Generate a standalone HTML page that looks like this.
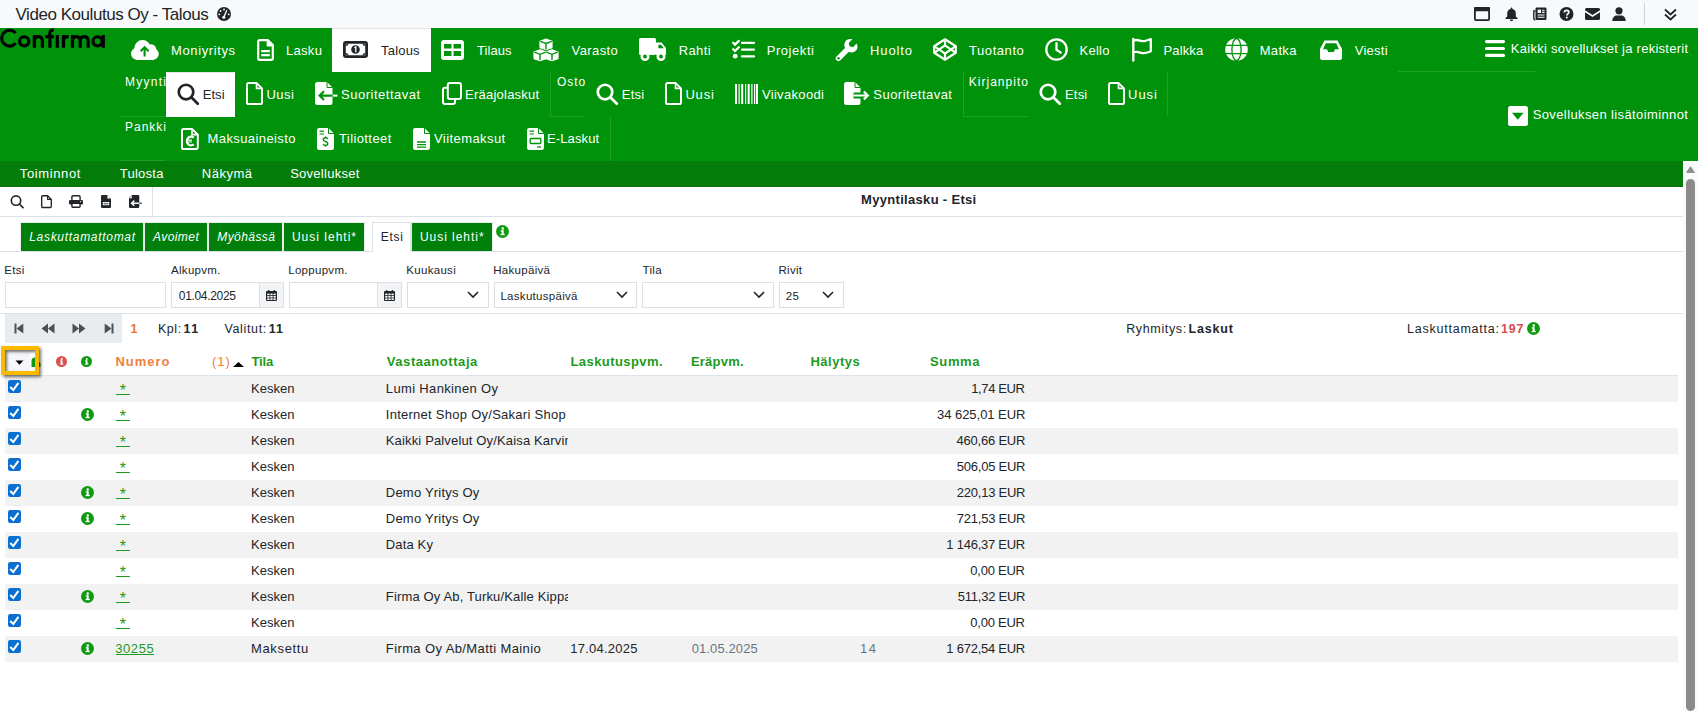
<!DOCTYPE html>
<html><head><meta charset="utf-8"><style>
html,body{margin:0;padding:0;width:1698px;height:711px;overflow:hidden;background:#fff;position:relative;font-family:"Liberation Sans",sans-serif}
.t{position:absolute;white-space:pre}
.b{position:absolute}
svg{position:absolute;overflow:visible}
</style></head><body>
<div class="b" style="left:0px;top:0px;width:1698px;height:28px;background:#f8f9fa;"></div><div class="b" style="left:1644px;top:3px;width:1px;height:22px;background:#d0d3d6;"></div><div class="b" style="left:0px;top:28px;width:1698px;height:133px;background:#00920a;"></div><div class="b" style="left:332px;top:28px;width:99px;height:44px;background:#ffffff;"></div><div class="b" style="left:332px;top:28px;width:99px;height:1px;background:#e2e5ea;"></div><div class="b" style="left:166px;top:72px;width:69px;height:45px;background:#ffffff;"></div><div class="b" style="left:167px;top:72px;width:67px;height:1px;background:#e4e6e8;"></div><div class="b" style="left:120px;top:116px;width:45px;height:1px;background:rgba(255,255,255,0.13);"></div><div class="b" style="left:120px;top:160px;width:45px;height:1px;background:rgba(255,255,255,0.13);"></div><div class="b" style="left:550px;top:72px;width:1px;height:44px;background:rgba(255,255,255,0.13);"></div><div class="b" style="left:550px;top:116px;width:34px;height:1px;background:rgba(255,255,255,0.13);"></div><div class="b" style="left:610px;top:117px;width:1px;height:44px;background:rgba(255,255,255,0.13);"></div><div class="b" style="left:963px;top:72px;width:1px;height:44px;background:rgba(255,255,255,0.13);"></div><div class="b" style="left:963px;top:116px;width:65px;height:1px;background:rgba(255,255,255,0.13);"></div><div class="b" style="left:1167px;top:72px;width:1px;height:44px;background:rgba(255,255,255,0.13);"></div><div class="b" style="left:1398px;top:71px;width:137px;height:1px;background:rgba(255,255,255,0.13);"></div><div class="b" style="left:0px;top:161px;width:1683px;height:26px;background:#047c0a;"></div><div class="b" style="left:0px;top:186px;width:1683px;height:1px;background:#03700a;"></div><div class="b" style="left:1683px;top:161px;width:15px;height:550px;background:#fafafa;"></div><div class="b" style="left:152px;top:187px;width:1px;height:29px;background:#dee2e6;"></div><div class="b" style="left:0px;top:216px;width:1683px;height:1px;background:#dee2e6;"></div><div class="b" style="left:0px;top:251px;width:1683px;height:1px;background:#dee2e6;"></div><div class="b" style="left:20px;top:222px;width:124px;height:29px;background:#e9ecef;"></div><div class="b" style="left:21px;top:223px;width:122px;height:28px;background:#00800b;"></div><div class="b" style="left:144px;top:222px;width:64px;height:29px;background:#e9ecef;"></div><div class="b" style="left:145px;top:223px;width:62px;height:28px;background:#00800b;"></div><div class="b" style="left:208px;top:222px;width:75px;height:29px;background:#e9ecef;"></div><div class="b" style="left:209px;top:223px;width:73px;height:28px;background:#00800b;"></div><div class="b" style="left:283px;top:222px;width:82px;height:29px;background:#e9ecef;"></div><div class="b" style="left:284px;top:223px;width:80px;height:28px;background:#00800b;"></div><div class="b" style="left:411px;top:222px;width:82px;height:29px;background:#e9ecef;"></div><div class="b" style="left:412px;top:223px;width:80px;height:28px;background:#00800b;"></div><div class="b" style="left:372px;top:222px;width:39px;height:30px;background:#ffffff;border:1px solid #dee2e6;border-bottom:none;box-sizing:border-box"></div><div class="b" style="left:5px;top:282px;width:161px;height:26px;background:#ffffff;border:1px solid #dcdfe3;box-sizing:border-box"></div><div class="b" style="left:171px;top:282px;width:113px;height:26px;background:#ffffff;border:1px solid #dcdfe3;box-sizing:border-box"></div><div class="b" style="left:259px;top:282px;width:25px;height:26px;background:#f3f4f5;border:1px solid #dcdfe3;box-sizing:border-box"></div><div class="b" style="left:289px;top:282px;width:113px;height:26px;background:#ffffff;border:1px solid #dcdfe3;box-sizing:border-box"></div><div class="b" style="left:377px;top:282px;width:25px;height:26px;background:#f3f4f5;border:1px solid #dcdfe3;box-sizing:border-box"></div><div class="b" style="left:407px;top:282px;width:82px;height:26px;background:#ffffff;border:1px solid #dcdfe3;box-sizing:border-box"></div><div class="b" style="left:494px;top:282px;width:143px;height:26px;background:#ffffff;border:1px solid #dcdfe3;box-sizing:border-box"></div><div class="b" style="left:642px;top:282px;width:132px;height:26px;background:#ffffff;border:1px solid #dcdfe3;box-sizing:border-box"></div><div class="b" style="left:779px;top:282px;width:65px;height:26px;background:#ffffff;border:1px solid #dcdfe3;box-sizing:border-box"></div><div class="b" style="left:0px;top:313px;width:1683px;height:1px;background:#dee2e6;"></div><div class="b" style="left:5px;top:314px;width:117px;height:29px;background:#e9ecef;"></div><div class="b" style="left:5px;top:375px;width:1673px;height:1px;background:#dfe2e6;"></div><div class="b" style="left:5px;top:376px;width:1673px;height:26px;background:#f2f2f2"></div><div class="b" style="left:5px;top:428px;width:1673px;height:26px;background:#f2f2f2"></div><div class="b" style="left:5px;top:480px;width:1673px;height:26px;background:#f2f2f2"></div><div class="b" style="left:5px;top:532px;width:1673px;height:26px;background:#f2f2f2"></div><div class="b" style="left:5px;top:584px;width:1673px;height:26px;background:#f2f2f2"></div><div class="b" style="left:5px;top:636px;width:1673px;height:26px;background:#f2f2f2"></div><div class="b" style="left:1686px;top:179px;width:9px;height:532px;background:#8a8a8a;border-radius:4.5px"></div>
<svg style="left:0;top:0" width="110" height="50" viewBox="0 0 110 50"><g fill="none" stroke="#000" stroke-width="3.2"><path d="M15.65 33.07A7.9 7.9 0 1 0 15.65 43.23"/><circle cx="24.25" cy="41.35" r="4.6"/><path d="M34.3 47.7V35M34.3 41C34.3 38 36 36.6 38.4 36.6C41 36.6 42.4 38.2 42.4 41V47.7"/><path d="M49.9 47.7V33C49.9 30.4 51.2 30.1 53.8 30.2M45.3 36.6H53.8"/><path d="M57.3 35V47.7"/><path d="M63.5 47.7V35M63.5 40.5C63.5 37.8 65.5 36.6 68.7 36.6"/><path d="M72.5 47.7V35M72.5 41C72.5 38.2 74 36.6 76.3 36.6C78.6 36.6 80.2 38.2 80.2 41V47.7M80.2 41C80.2 38.2 81.8 36.6 84.1 36.6C86.4 36.6 88.1 38.2 88.1 41V47.7"/><circle cx="97.55" cy="41.35" r="4.6"/><path d="M103.3 35V47.7"/></g></svg><svg style="left:130px;top:39px" width="30" height="22" viewBox="0 0 30 22"><g fill="#ffffff"><circle cx="12.5" cy="9.2" r="8.2"/><circle cx="21" cy="10.5" r="5.2"/><circle cx="7" cy="14.8" r="6"/><circle cx="23" cy="15" r="5.8"/><rect x="6" y="13" width="18" height="8" /></g>
<path d="M14.6 17.5V8.6M10.6 12.3L14.6 8.3L18.6 12.3" stroke="#00920a" stroke-width="2.1" fill="none"/></svg><svg style="left:257px;top:39px" width="17" height="22" viewBox="0 0 17 22"><path d="M2.5 1.2H11L15.8 6V19.3a1.6 1.6 0 0 1-1.6 1.6H2.8a1.6 1.6 0 0 1-1.6-1.6V2.6a1.4 1.4 0 0 1 1.3-1.4Z" fill="none" stroke="#ffffff" stroke-width="2.2" stroke-linejoin="round"/><path d="M10.4 1.2V6.7H15.8Z" fill="#ffffff" stroke="#ffffff" stroke-width="1.6" stroke-linejoin="round"/>
<rect x="4.2" y="11" width="8.6" height="2.3" fill="#ffffff"/><rect x="4.2" y="15" width="8.6" height="2.3" fill="#ffffff"/></svg><svg style="left:343px;top:41px" width="25" height="17" viewBox="0 0 25 17"><rect x="1.4" y="1.4" width="22.2" height="14.2" rx="1.6" fill="none" stroke="#212529" stroke-width="2.8"/>
<path d="M3 4.2a1.5 1.5 0 0 0 1.6-1.6M22 4.2a1.5 1.5 0 0 1-1.6-1.6M3 12.8a1.5 1.5 0 0 1 1.6 1.6M22 12.8a1.5 1.5 0 0 0-1.6 1.6" stroke="#212529" stroke-width="1.6" fill="none"/>
<circle cx="12.5" cy="8.5" r="4.3" fill="#212529"/><path d="M11.3 6.6L12.8 6V11.2" stroke="#ffffff" stroke-width="1.3" fill="none"/></svg><svg style="left:441px;top:40px" width="23" height="20" viewBox="0 0 23 20"><rect x="0" y="0" width="23" height="20" rx="3" fill="#ffffff"/>
<rect x="3" y="4" width="7.5" height="4.5" fill="#00920a"/><rect x="12.5" y="4" width="7.5" height="4.5" fill="#00920a"/>
<rect x="3" y="11" width="7.5" height="5" fill="#00920a"/><rect x="12.5" y="11" width="7.5" height="5" fill="#00920a"/></svg><svg style="left:533px;top:38px" width="26" height="23" viewBox="0 0 26 23"><g fill="#ffffff" stroke="#ffffff" stroke-width="1.2" stroke-linejoin="round">
<path d="M13 1L19 3.2V9.6L13 11.8L7 9.6V3.2Z"/><path d="M7 11.8L13 14V20.6L7 22.6L1 20.6V14Z"/><path d="M19 11.8L25 14V20.6L19 22.6L13 20.6V14Z"/></g>
<g stroke="#00920a" stroke-width="1.4" fill="none"><path d="M7.3 3.4L13 5.5L18.7 3.4M13 5.5V11.4"/><path d="M1.3 14.2L7 16.3L12.7 14.2M7 16.3V22.2"/><path d="M13.3 14.2L19 16.3L24.7 14.2M19 16.3V22.2"/></g></svg><svg style="left:639px;top:38px" width="28" height="23" viewBox="0 0 28 23"><g fill="#ffffff"><rect x="0" y="0" width="17" height="17" rx="1.5"/><path d="M17 4.5H22.5L27 10V17H17Z"/><circle cx="6" cy="18.5" r="4.5"/><circle cx="22" cy="18.5" r="4.5"/></g>
<path d="M19.4 6.8H22L24.8 10.2H19.4Z" fill="#00920a"/><circle cx="6" cy="18.5" r="1.9" fill="#00920a"/><circle cx="22" cy="18.5" r="1.9" fill="#00920a"/></svg><svg style="left:732px;top:40px" width="23" height="19" viewBox="0 0 23 19"><g stroke="#ffffff" stroke-width="2.3" fill="none" stroke-linecap="round"><path d="M1.2 2.8L3 4.6L6.8 0.9"/><path d="M1.2 9.2L3 11L6.8 7.3"/><path d="M10 2.8H22M10 9.6H22M10 16.4H22"/></g><circle cx="3.2" cy="16.2" r="2.4" fill="#ffffff"/></svg><svg style="left:835px;top:38px" width="23" height="23" viewBox="0 0 23 23"><path d="M21.6 5.6L18 9.2L14.6 8.3L13.7 4.9L17.3 1.3C14.5 0.4 11.2 1.4 9.9 4.3C9 6.2 9.2 8.2 10 9.9L1.5 18.4C0.3 19.6 0.3 21.2 1.5 22.3C2.6 23.4 4.3 23.4 5.4 22.3L13.9 13.8C15.6 14.6 17.7 14.7 19.5 13.8C22.4 12.4 23.4 9.1 21.6 5.6Z" fill="#ffffff"/><circle cx="3.5" cy="20.2" r="1.2" fill="#00920a"/></svg><svg style="left:933px;top:38px" width="24" height="23" viewBox="0 0 24 23"><g fill="none" stroke="#ffffff" stroke-width="2.2" stroke-linejoin="round"><path d="M12 1.3L22.8 8.2V14.8L12 21.7L1.2 14.8V8.2Z"/><path d="M12 1.3V7.3M12 15.7V21.7M1.2 8.2L12 15.7L22.8 8.2M1.2 14.8L12 7.3L22.8 14.8"/></g></svg><svg style="left:1045px;top:38px" width="23" height="23" viewBox="0 0 23 23"><circle cx="11.5" cy="11.5" r="10.2" fill="none" stroke="#ffffff" stroke-width="2.3"/><path d="M11.5 5.2V11.8L15.6 14.5" stroke="#ffffff" stroke-width="2.3" fill="none" stroke-linecap="round"/></svg><svg style="left:1132px;top:38px" width="20" height="23" viewBox="0 0 20 23"><path d="M1.3 1V22.5" stroke="#ffffff" stroke-width="2.4" stroke-linecap="round"/><path d="M1.3 2.6C5.5 0.6 8.8 3.6 12.2 3.1C14.7 2.7 17 1.5 18.8 1.2V13.3C16.8 14.3 14.6 15 12.2 15.2C8.8 15.4 5.5 12.7 1.3 14.3" fill="none" stroke="#ffffff" stroke-width="2.3" stroke-linejoin="round"/></svg><svg style="left:1225px;top:38px" width="23" height="23" viewBox="0 0 23 23"><circle cx="11.5" cy="11.5" r="11.3" fill="#ffffff"/><g stroke="#00920a" stroke-width="1.3" fill="none"><ellipse cx="11.5" cy="11.5" rx="4.6" ry="11"/><path d="M0.5 7.3H22.5M0.5 15.7H22.5"/></g></svg><svg style="left:1320px;top:40px" width="22" height="20" viewBox="0 0 22 20"><path d="M4.5 0.5H17.5L22 9V17.5A2.5 2.5 0 0 1 19.5 20H2.5A2.5 2.5 0 0 1 0 17.5V9Z" fill="#ffffff"/><path d="M5.8 3.2H16.2L19 9.3H15L13.8 12H8.2L7 9.3H3Z" fill="#00920a"/></svg><svg style="left:1485px;top:40px" width="20" height="17" viewBox="0 0 20 17"><g stroke="#ffffff" stroke-width="3.1" stroke-linecap="round"><path d="M1.5 1.6H18.5M1.5 8.5H18.5M1.5 15.4H18.5"/></g></svg><svg style="left:1508px;top:106px" width="20" height="20" viewBox="0 0 20 20"><rect x="0" y="0" width="20" height="20" rx="2.5" fill="#ffffff"/><path d="M4 6.8H15.6L9.8 13.8Z" fill="#00920a"/></svg><svg style="left:177px;top:83px" width="22" height="22" viewBox="0 0 22 22"><circle cx="9.02" cy="9.02" r="7.260000000000001" fill="none" stroke="#212529" stroke-width="2.7"/><path d="M14.3 14.3L20.8 20.8" stroke="#212529" stroke-width="2.7" stroke-linecap="round"/></svg><svg style="left:596px;top:83px" width="22" height="22" viewBox="0 0 22 22"><circle cx="9.02" cy="9.02" r="7.260000000000001" fill="none" stroke="#ffffff" stroke-width="2.7"/><path d="M14.3 14.3L20.8 20.8" stroke="#ffffff" stroke-width="2.7" stroke-linecap="round"/></svg><svg style="left:1039px;top:83px" width="22" height="22" viewBox="0 0 22 22"><circle cx="9.02" cy="9.02" r="7.260000000000001" fill="none" stroke="#ffffff" stroke-width="2.7"/><path d="M14.3 14.3L20.8 20.8" stroke="#ffffff" stroke-width="2.7" stroke-linecap="round"/></svg><svg style="left:246px;top:82px" width="17" height="23" viewBox="0 0 17 23"><path d="M2.6 1H10.5L16 6.4V20.4a1.6 1.6 0 0 1-1.6 1.6H2.6a1.6 1.6 0 0 1-1.6-1.6V2.6A1.6 1.6 0 0 1 2.6 1Z" fill="none" stroke="#ffffff" stroke-width="1.9" stroke-linejoin="round"/><path d="M10.5 1V6.4H16" fill="none" stroke="#ffffff" stroke-width="1.6"/></svg><svg style="left:665px;top:82px" width="17" height="23" viewBox="0 0 17 23"><path d="M2.6 1H10.5L16 6.4V20.4a1.6 1.6 0 0 1-1.6 1.6H2.6a1.6 1.6 0 0 1-1.6-1.6V2.6A1.6 1.6 0 0 1 2.6 1Z" fill="none" stroke="#ffffff" stroke-width="1.9" stroke-linejoin="round"/><path d="M10.5 1V6.4H16" fill="none" stroke="#ffffff" stroke-width="1.6"/></svg><svg style="left:1108px;top:82px" width="17" height="23" viewBox="0 0 17 23"><path d="M2.6 1H10.5L16 6.4V20.4a1.6 1.6 0 0 1-1.6 1.6H2.6a1.6 1.6 0 0 1-1.6-1.6V2.6A1.6 1.6 0 0 1 2.6 1Z" fill="none" stroke="#ffffff" stroke-width="1.9" stroke-linejoin="round"/><path d="M10.5 1V6.4H16" fill="none" stroke="#ffffff" stroke-width="1.6"/></svg><svg style="left:315px;top:82px" width="23" height="23" viewBox="0 0 23 23"><path d="M2.5 0H12L17.5 5.5V20.5a2.5 2.5 0 0 1-2.5 2.5H2.5A2.5 2.5 0 0 1 0 20.5V2.5A2.5 2.5 0 0 1 2.5 0Z" fill="#ffffff"/><path d="M12 0V5.5H17.5" fill="none" stroke="#00920a" stroke-width="1"/>
<path d="M17.5 13.6H22.5" stroke="#ffffff" stroke-width="2"/><path d="M17.5 13.6H4.5M9 9.2L4.6 13.6L9 18" stroke="#00920a" stroke-width="2.2" fill="none"/></svg><svg style="left:442px;top:82px" width="20" height="23" viewBox="0 0 20 23"><rect x="5.8" y="1" width="13.2" height="16" rx="2" fill="none" stroke="#ffffff" stroke-width="2"/><path d="M5.8 5.8H3A2 2 0 0 0 1 7.8V20a2 2 0 0 0 2 2H11a2 2 0 0 0 2-2V17" fill="none" stroke="#ffffff" stroke-width="2"/></svg><svg style="left:735px;top:84px" width="23" height="20" viewBox="0 0 23 20"><g fill="#ffffff"><rect x="0" y="0" width="2" height="20"/><rect x="3.5" y="0" width="1.2" height="20"/><rect x="6.2" y="0" width="2" height="20"/><rect x="10" y="0" width="1.2" height="20"/><rect x="12.7" y="0" width="2" height="20"/><rect x="16.3" y="0" width="1.2" height="20"/><rect x="19" y="0" width="1.2" height="20"/><rect x="21" y="0" width="2" height="20"/></g></svg><svg style="left:844px;top:82px" width="26" height="23" viewBox="0 0 26 23"><path d="M2.5 0H11L16.5 5.5V10.5H9.5V16.5H16.5V20.5a2.5 2.5 0 0 1-2.5 2.5H2.5A2.5 2.5 0 0 1 0 20.5V2.5A2.5 2.5 0 0 1 2.5 0Z" fill="#ffffff"/><path d="M11 0V5.5H16.5" fill="none" stroke="#00920a" stroke-width="1"/>
<path d="M9.5 13.5H23.5M19.8 9.6L23.8 13.5L19.8 17.4" stroke="#ffffff" stroke-width="2.2" fill="none"/></svg><svg style="left:181px;top:128px" width="18" height="22" viewBox="0 0 18 22"><path d="M2.6 1H11L16.8 6.6V19.4a1.6 1.6 0 0 1-1.6 1.6H2.6a1.6 1.6 0 0 1-1.6-1.6V2.6A1.6 1.6 0 0 1 2.6 1Z" fill="none" stroke="#ffffff" stroke-width="2"/><path d="M11 1V6.6H16.8" fill="none" stroke="#ffffff" stroke-width="1.6"/>
<path d="M12.8 9.6a4.3 4.3 0 1 0 0 6.8" fill="none" stroke="#ffffff" stroke-width="2.2"/><path d="M6 12.2H11M6 14H11" stroke="#ffffff" stroke-width="1.2"/></svg><svg style="left:317px;top:128px" width="17" height="22" viewBox="0 0 17 22"><path d="M2.3 0H11.5L17 5.5V19.7a2.3 2.3 0 0 1-2.3 2.3H2.3A2.3 2.3 0 0 1 0 19.7V2.3A2.3 2.3 0 0 1 2.3 0Z" fill="#ffffff"/><path d="M11.5 0V5.5H17" fill="none" stroke="#00920a" stroke-width="1"/><path d="M2.5 3.2H7M2.5 6H7" stroke="#00920a" stroke-width="1.2"/><path d="M10.8 10.8C10.2 10 9.4 9.8 8.5 9.8C7.2 9.8 6.2 10.5 6.2 11.6C6.2 14 10.8 13 10.8 15.6C10.8 16.7 9.8 17.4 8.5 17.4C7.4 17.4 6.6 17 6 16.3M8.5 8.5V9.8M8.5 17.4V18.8" stroke="#00920a" stroke-width="1.4" fill="none"/></svg><svg style="left:413px;top:128px" width="17" height="22" viewBox="0 0 17 22"><path d="M2.3 0H11.5L17 5.5V19.7a2.3 2.3 0 0 1-2.3 2.3H2.3A2.3 2.3 0 0 1 0 19.7V2.3A2.3 2.3 0 0 1 2.3 0Z" fill="#ffffff"/><path d="M11.5 0V5.5H17" fill="none" stroke="#00920a" stroke-width="1"/><path d="M4 14H13M4 16.6H13M4 19.2H13" stroke="#00920a" stroke-width="1.3"/></svg><svg style="left:527px;top:128px" width="17" height="22" viewBox="0 0 17 22"><path d="M2.3 0H11.5L17 5.5V19.7a2.3 2.3 0 0 1-2.3 2.3H2.3A2.3 2.3 0 0 1 0 19.7V2.3A2.3 2.3 0 0 1 2.3 0Z" fill="#ffffff"/><path d="M11.5 0V5.5H17" fill="none" stroke="#00920a" stroke-width="1"/><path d="M2.5 3.2H7M2.5 6H7" stroke="#00920a" stroke-width="1.2"/><rect x="3.2" y="10.5" width="10.6" height="5" rx="0.8" fill="none" stroke="#00920a" stroke-width="1.3"/><path d="M10 19H14" stroke="#00920a" stroke-width="1.3"/></svg><svg style="left:10px;top:195px" width="14" height="13" viewBox="0 0 14 13"><circle cx="6" cy="5.6" r="4.7" fill="none" stroke="#212529" stroke-width="1.6"/><path d="M9.4 9L13 12.6" stroke="#212529" stroke-width="1.7" stroke-linecap="round"/></svg><svg style="left:41px;top:195px" width="11" height="13" viewBox="0 0 11 13"><path d="M1.8 0.7H6.6L10.3 4.4V11.4a1.1 1.1 0 0 1-1.1 1.1H1.8a1.1 1.1 0 0 1-1.1-1.1V1.8A1.1 1.1 0 0 1 1.8 0.7Z" fill="none" stroke="#212529" stroke-width="1.35" stroke-linejoin="round"/><path d="M6.6 0.7V4.4H10.3" fill="none" stroke="#212529" stroke-width="1.1"/></svg><svg style="left:69px;top:195px" width="14" height="13" viewBox="0 0 14 13"><rect x="2.9" y="0.7" width="8.2" height="5" rx="1.2" fill="none" stroke="#212529" stroke-width="1.4"/><rect x="0" y="5" width="14" height="4.6" rx="1.3" fill="#212529"/><circle cx="11.6" cy="6.6" r="0.7" fill="#fff"/><rect x="2.9" y="8.2" width="8.2" height="4.1" rx="1" fill="#fff" stroke="#212529" stroke-width="1.4"/></svg><svg style="left:101px;top:195px" width="10" height="13" viewBox="0 0 10 13"><path d="M1.3 0H6.2L10 3.8V11.7A1.3 1.3 0 0 1 8.7 13H1.3A1.3 1.3 0 0 1 0 11.7V1.3A1.3 1.3 0 0 1 1.3 0Z" fill="#212529"/><path d="M6.4 0.2V3.6H9.8Z" fill="#fff"/><rect x="1.8" y="7" width="6.4" height="3.2" fill="#fff"/><rect x="2.6" y="7.8" width="4.8" height="1.6" fill="#777"/></svg><svg style="left:128px;top:195px" width="14" height="13" viewBox="0 0 14 13"><path d="M4 0H10A1.3 1.3 0 0 1 11.3 1.3V11.7A1.3 1.3 0 0 1 10 13H2.3A1.3 1.3 0 0 1 1 11.7V3Z" fill="#212529"/><path d="M1.2 3.2L3.8 0.4V3.2Z" fill="#fff"/><path d="M13.5 8.2H3.6M6.3 5.6L3.6 8.2L6.3 10.8" stroke="#fff" stroke-width="1.5" fill="none"/><path d="M11.3 8.2H13.8" stroke="#212529" stroke-width="1.2"/></svg><svg style="left:217px;top:7px" width="14" height="14" viewBox="0 0 14 14"><circle cx="7" cy="7" r="7" fill="#212529"/><g fill="#fff"><circle cx="7" cy="2.5" r="0.9"/><circle cx="3.6" cy="4" r="0.9"/><circle cx="2.3" cy="7.3" r="0.9"/><circle cx="11.7" cy="7.3" r="0.9"/></g><path d="M9.8 3.2L7.2 9.5" stroke="#fff" stroke-width="1.3"/><circle cx="6.8" cy="10.2" r="1.5" fill="#fff"/></svg><svg style="left:1474px;top:7px" width="16" height="14" viewBox="0 0 16 14"><rect x="0.9" y="0.9" width="14.2" height="12.2" rx="1" fill="none" stroke="#212529" stroke-width="1.8"/><rect x="0" y="0" width="16" height="4.2" rx="1" fill="#212529"/></svg><svg style="left:1505px;top:7px" width="13" height="14" viewBox="0 0 13 14"><path d="M6.5 0.5C6 0.5 5.6 0.9 5.6 1.4V2C3.5 2.4 2.2 4.2 2.2 6.4V9.5L0.4 11.2V12H12.6V11.2L10.8 9.5V6.4C10.8 4.2 9.5 2.4 7.4 2V1.4C7.4 0.9 7 0.5 6.5 0.5Z" fill="#212529"/><path d="M4.8 12.5A1.7 1.7 0 0 0 8.2 12.5Z" fill="#212529"/></svg><svg style="left:1533px;top:7px" width="14" height="14" viewBox="0 0 14 14"><rect x="2.5" y="0.5" width="11" height="12.5" rx="1.2" fill="#212529"/><path d="M2.5 4H0.8V11.5A1.5 1.5 0 0 0 2.3 13" fill="none" stroke="#212529" stroke-width="1.4"/><rect x="4.6" y="2.6" width="3.4" height="3.4" fill="#fff"/><path d="M9 3.2H11.6M9 5.4H11.6M4.6 8H11.6M4.6 10.3H11.6" stroke="#fff" stroke-width="1.1"/></svg><svg style="left:1559px;top:7px" width="15" height="14" viewBox="0 0 15 14"><circle cx="7.5" cy="7" r="7" fill="#212529"/><path d="M5.3 5.4C5.3 4.1 6.3 3.3 7.5 3.3C8.8 3.3 9.8 4.1 9.8 5.3C9.8 6.8 7.8 7 7.8 8.6" fill="none" stroke="#fff" stroke-width="1.7"/><circle cx="7.8" cy="10.6" r="1" fill="#fff"/></svg><svg style="left:1585px;top:8px" width="15" height="12" viewBox="0 0 15 12"><path d="M0 1.5A1.5 1.5 0 0 1 1.5 0H13.5A1.5 1.5 0 0 1 15 1.5V2.2L7.5 7L0 2.2Z" fill="#212529"/><path d="M0 4.2L7.5 9L15 4.2V10.5A1.5 1.5 0 0 1 13.5 12H1.5A1.5 1.5 0 0 1 0 10.5Z" fill="#212529"/></svg><svg style="left:1612px;top:7px" width="14" height="14" viewBox="0 0 14 14"><circle cx="7" cy="3.8" r="3.6" fill="#212529"/><path d="M0.3 14C0.3 10.4 2.5 8.5 5 8.5H9C11.5 8.5 13.7 10.4 13.7 14Z" fill="#212529"/></svg><svg style="left:1664px;top:8px" width="13" height="12" viewBox="0 0 13 12"><path d="M1 1.5L6.5 6.5L12 1.5M1 6.5L6.5 11.5L12 6.5" fill="none" stroke="#212529" stroke-width="1.8"/></svg><svg style="left:266px;top:290px" width="11" height="11" viewBox="0 0 11 11"><rect x="0" y="1" width="11" height="10" rx="1" fill="#212529"/><g fill="#fff"><rect x="1.2" y="3.6" width="2.3" height="1.6"/><rect x="4.35" y="3.6" width="2.3" height="1.6"/><rect x="7.5" y="3.6" width="2.3" height="1.6"/><rect x="1.2" y="6" width="2.3" height="1.6"/><rect x="4.35" y="6" width="2.3" height="1.6"/><rect x="7.5" y="6" width="2.3" height="1.6"/><rect x="1.2" y="8.4" width="2.3" height="1.6"/><rect x="4.35" y="8.4" width="2.3" height="1.6"/><rect x="7.5" y="8.4" width="2.3" height="1.6"/></g><path d="M2.7 0V2M8.3 0V2" stroke="#212529" stroke-width="1.2"/></svg><svg style="left:384px;top:290px" width="11" height="11" viewBox="0 0 11 11"><rect x="0" y="1" width="11" height="10" rx="1" fill="#212529"/><g fill="#fff"><rect x="1.2" y="3.6" width="2.3" height="1.6"/><rect x="4.35" y="3.6" width="2.3" height="1.6"/><rect x="7.5" y="3.6" width="2.3" height="1.6"/><rect x="1.2" y="6" width="2.3" height="1.6"/><rect x="4.35" y="6" width="2.3" height="1.6"/><rect x="7.5" y="6" width="2.3" height="1.6"/><rect x="1.2" y="8.4" width="2.3" height="1.6"/><rect x="4.35" y="8.4" width="2.3" height="1.6"/><rect x="7.5" y="8.4" width="2.3" height="1.6"/></g><path d="M2.7 0V2M8.3 0V2" stroke="#212529" stroke-width="1.2"/></svg><svg style="left:467px;top:291px" width="12" height="8" viewBox="0 0 12 8"><path d="M1 1L6 6L11 1" fill="none" stroke="#212529" stroke-width="1.6"/></svg><svg style="left:616px;top:291px" width="12" height="8" viewBox="0 0 12 8"><path d="M1 1L6 6L11 1" fill="none" stroke="#212529" stroke-width="1.6"/></svg><svg style="left:753px;top:291px" width="12" height="8" viewBox="0 0 12 8"><path d="M1 1L6 6L11 1" fill="none" stroke="#212529" stroke-width="1.6"/></svg><svg style="left:822px;top:291px" width="12" height="8" viewBox="0 0 12 8"><path d="M1 1L6 6L11 1" fill="none" stroke="#212529" stroke-width="1.6"/></svg><svg style="left:14px;top:323px" width="10" height="11" viewBox="0 0 10 11"><rect x="0.5" y="0.5" width="2" height="10" fill="#495057"/><path d="M9.3 0.5V10.5L2.5 5.5Z" fill="#495057"/></svg><svg style="left:41px;top:323px" width="14" height="11" viewBox="0 0 14 11"><path d="M7 0.5V10.5L0.5 5.5Z M13.5 0.5V10.5L7 5.5Z" fill="#495057"/></svg><svg style="left:72px;top:323px" width="14" height="11" viewBox="0 0 14 11"><path d="M0.5 0.5V10.5L7 5.5Z M7 0.5V10.5L13.5 5.5Z" fill="#495057"/></svg><svg style="left:104px;top:323px" width="10" height="11" viewBox="0 0 10 11"><rect x="7.5" y="0.5" width="2" height="10" fill="#495057"/><path d="M0.7 0.5V10.5L7.5 5.5Z" fill="#495057"/></svg><svg style="left:496px;top:225px" width="13" height="13" viewBox="0 0 13 13"><circle cx="6.5" cy="6.5" r="6.5" fill="#109a12"/><g fill="#fff"><circle cx="6.76" cy="3.5100000000000002" r="1.235"/><rect x="5.72" y="5.33" width="1.95" height="4.29"/><rect x="4.68" y="5.33" width="2.6" height="1.17"/><rect x="4.55" y="8.84" width="4.16" height="1.3"/></g></svg><svg style="left:1527px;top:322px" width="13" height="13" viewBox="0 0 13 13"><circle cx="6.5" cy="6.5" r="6.5" fill="#109a12"/><g fill="#fff"><circle cx="6.76" cy="3.5100000000000002" r="1.235"/><rect x="5.72" y="5.33" width="1.95" height="4.29"/><rect x="4.68" y="5.33" width="2.6" height="1.17"/><rect x="4.55" y="8.84" width="4.16" height="1.3"/></g></svg><svg style="left:56px;top:356px" width="11" height="11" viewBox="0 0 11 11"><circle cx="5.5" cy="5.5" r="5.5" fill="#d9534f"/><g fill="#fff"><circle cx="5.720000000000001" cy="2.97" r="1.045"/><rect x="4.84" y="4.51" width="1.65" height="3.6300000000000003"/><rect x="3.96" y="4.51" width="2.2" height="0.99"/><rect x="3.8499999999999996" y="7.48" width="3.52" height="1.1"/></g></svg><svg style="left:81px;top:356px" width="11" height="11" viewBox="0 0 11 11"><circle cx="5.5" cy="5.5" r="5.5" fill="#109a12"/><g fill="#fff"><circle cx="5.720000000000001" cy="2.97" r="1.045"/><rect x="4.84" y="4.51" width="1.65" height="3.6300000000000003"/><rect x="3.96" y="4.51" width="2.2" height="0.99"/><rect x="3.8499999999999996" y="7.48" width="3.52" height="1.1"/></g></svg><svg style="left:81px;top:408px" width="13" height="13" viewBox="0 0 13 13"><circle cx="6.5" cy="6.5" r="6.5" fill="#109a12"/><g fill="#fff"><circle cx="6.76" cy="3.5100000000000002" r="1.235"/><rect x="5.72" y="5.33" width="1.95" height="4.29"/><rect x="4.68" y="5.33" width="2.6" height="1.17"/><rect x="4.55" y="8.84" width="4.16" height="1.3"/></g></svg><svg style="left:81px;top:486px" width="13" height="13" viewBox="0 0 13 13"><circle cx="6.5" cy="6.5" r="6.5" fill="#109a12"/><g fill="#fff"><circle cx="6.76" cy="3.5100000000000002" r="1.235"/><rect x="5.72" y="5.33" width="1.95" height="4.29"/><rect x="4.68" y="5.33" width="2.6" height="1.17"/><rect x="4.55" y="8.84" width="4.16" height="1.3"/></g></svg><svg style="left:81px;top:512px" width="13" height="13" viewBox="0 0 13 13"><circle cx="6.5" cy="6.5" r="6.5" fill="#109a12"/><g fill="#fff"><circle cx="6.76" cy="3.5100000000000002" r="1.235"/><rect x="5.72" y="5.33" width="1.95" height="4.29"/><rect x="4.68" y="5.33" width="2.6" height="1.17"/><rect x="4.55" y="8.84" width="4.16" height="1.3"/></g></svg><svg style="left:81px;top:590px" width="13" height="13" viewBox="0 0 13 13"><circle cx="6.5" cy="6.5" r="6.5" fill="#109a12"/><g fill="#fff"><circle cx="6.76" cy="3.5100000000000002" r="1.235"/><rect x="5.72" y="5.33" width="1.95" height="4.29"/><rect x="4.68" y="5.33" width="2.6" height="1.17"/><rect x="4.55" y="8.84" width="4.16" height="1.3"/></g></svg><svg style="left:81px;top:642px" width="13" height="13" viewBox="0 0 13 13"><circle cx="6.5" cy="6.5" r="6.5" fill="#109a12"/><g fill="#fff"><circle cx="6.76" cy="3.5100000000000002" r="1.235"/><rect x="5.72" y="5.33" width="1.95" height="4.29"/><rect x="4.68" y="5.33" width="2.6" height="1.17"/><rect x="4.55" y="8.84" width="4.16" height="1.3"/></g></svg><div class="b" style="left:5px;top:350px;width:25px;height:21px;background:#f4f6fa"></div><svg style="left:31px;top:357px" width="12" height="11" viewBox="0 0 12 11"><path d="M3.5 0.5C4.5 0.5 5.5 1.5 5.5 3V4.5H7.5C8.5 4.5 9.5 5.5 9.5 6.5V10H0.5V4C0.5 2 2 0.5 3.5 0.5Z" fill="#0a9a12"/></svg><div class="b" style="left:1px;top:346px;width:38px;height:29px;border:4px solid #fbb900;box-sizing:border-box;background:transparent;box-shadow:2px 2px 3px rgba(0,0,0,0.55), inset 2px 2px 3px rgba(0,0,0,0.55)"></div><svg style="left:15px;top:360px" width="9" height="5" viewBox="0 0 9 5"><path d="M0.5 0.5H8.5L4.5 4.8Z" fill="#000"/></svg><svg style="left:233px;top:362px" width="11" height="5" viewBox="0 0 11 5"><path d="M0 5H11L5.5 0Z" fill="#000"/></svg><svg style="left:8px;top:380px" width="13" height="13" viewBox="0 0 13 13"><rect x="0" y="0" width="13" height="13" rx="2.2" fill="#0b6fd0"/><path d="M2.2 7L5.3 10L10.4 2.8" fill="none" stroke="#fff" stroke-width="2.1"/></svg><svg style="left:8px;top:406px" width="13" height="13" viewBox="0 0 13 13"><rect x="0" y="0" width="13" height="13" rx="2.2" fill="#0b6fd0"/><path d="M2.2 7L5.3 10L10.4 2.8" fill="none" stroke="#fff" stroke-width="2.1"/></svg><svg style="left:8px;top:432px" width="13" height="13" viewBox="0 0 13 13"><rect x="0" y="0" width="13" height="13" rx="2.2" fill="#0b6fd0"/><path d="M2.2 7L5.3 10L10.4 2.8" fill="none" stroke="#fff" stroke-width="2.1"/></svg><svg style="left:8px;top:458px" width="13" height="13" viewBox="0 0 13 13"><rect x="0" y="0" width="13" height="13" rx="2.2" fill="#0b6fd0"/><path d="M2.2 7L5.3 10L10.4 2.8" fill="none" stroke="#fff" stroke-width="2.1"/></svg><svg style="left:8px;top:484px" width="13" height="13" viewBox="0 0 13 13"><rect x="0" y="0" width="13" height="13" rx="2.2" fill="#0b6fd0"/><path d="M2.2 7L5.3 10L10.4 2.8" fill="none" stroke="#fff" stroke-width="2.1"/></svg><svg style="left:8px;top:510px" width="13" height="13" viewBox="0 0 13 13"><rect x="0" y="0" width="13" height="13" rx="2.2" fill="#0b6fd0"/><path d="M2.2 7L5.3 10L10.4 2.8" fill="none" stroke="#fff" stroke-width="2.1"/></svg><svg style="left:8px;top:536px" width="13" height="13" viewBox="0 0 13 13"><rect x="0" y="0" width="13" height="13" rx="2.2" fill="#0b6fd0"/><path d="M2.2 7L5.3 10L10.4 2.8" fill="none" stroke="#fff" stroke-width="2.1"/></svg><svg style="left:8px;top:562px" width="13" height="13" viewBox="0 0 13 13"><rect x="0" y="0" width="13" height="13" rx="2.2" fill="#0b6fd0"/><path d="M2.2 7L5.3 10L10.4 2.8" fill="none" stroke="#fff" stroke-width="2.1"/></svg><svg style="left:8px;top:588px" width="13" height="13" viewBox="0 0 13 13"><rect x="0" y="0" width="13" height="13" rx="2.2" fill="#0b6fd0"/><path d="M2.2 7L5.3 10L10.4 2.8" fill="none" stroke="#fff" stroke-width="2.1"/></svg><svg style="left:8px;top:614px" width="13" height="13" viewBox="0 0 13 13"><rect x="0" y="0" width="13" height="13" rx="2.2" fill="#0b6fd0"/><path d="M2.2 7L5.3 10L10.4 2.8" fill="none" stroke="#fff" stroke-width="2.1"/></svg><svg style="left:8px;top:640px" width="13" height="13" viewBox="0 0 13 13"><rect x="0" y="0" width="13" height="13" rx="2.2" fill="#0b6fd0"/><path d="M2.2 7L5.3 10L10.4 2.8" fill="none" stroke="#fff" stroke-width="2.1"/></svg><svg style="left:1686px;top:166px" width="9" height="7" viewBox="0 0 9 7"><path d="M0.5 6.5L4.5 0.8L8.5 6.5Z" fill="#909090" stroke="#909090" stroke-linejoin="round"/></svg>
<div class="t" style="left:15.50px;top:5px;font-size:17px;line-height:19px;color:#212529;letter-spacing:-0.452px">Video Koulutus Oy - Talous</div><div class="t" style="left:171.00px;top:43px;font-size:13px;line-height:15px;color:#ffffff;letter-spacing:0.622px">Moniyritys</div><div class="t" style="left:286.00px;top:43px;font-size:13px;line-height:15px;color:#ffffff;letter-spacing:0.300px">Lasku</div><div class="t" style="left:381.00px;top:43px;font-size:13px;line-height:15px;color:#212529;letter-spacing:0.200px">Talous</div><div class="t" style="left:477.00px;top:43px;font-size:13px;line-height:15px;color:#ffffff;letter-spacing:0.080px">Tilaus</div><div class="t" style="left:571.60px;top:43px;font-size:13px;line-height:15px;color:#ffffff;letter-spacing:0.400px">Varasto</div><div class="t" style="left:678.70px;top:43px;font-size:13px;line-height:15px;color:#ffffff;letter-spacing:0.375px">Rahti</div><div class="t" style="left:766.70px;top:43px;font-size:13px;line-height:15px;color:#ffffff;letter-spacing:0.557px">Projekti</div><div class="t" style="left:870.00px;top:43px;font-size:13px;line-height:15px;color:#ffffff;letter-spacing:0.880px">Huolto</div><div class="t" style="left:969.00px;top:43px;font-size:13px;line-height:15px;color:#ffffff;letter-spacing:0.571px">Tuotanto</div><div class="t" style="left:1079.50px;top:43px;font-size:13px;line-height:15px;color:#ffffff;letter-spacing:0.275px">Kello</div><div class="t" style="left:1163.50px;top:43px;font-size:13px;line-height:15px;color:#ffffff;letter-spacing:0.140px">Palkka</div><div class="t" style="left:1259.70px;top:43px;font-size:13px;line-height:15px;color:#ffffff;letter-spacing:0.325px">Matka</div><div class="t" style="left:1354.80px;top:43px;font-size:13px;line-height:15px;color:#ffffff;letter-spacing:0.240px">Viesti</div><div class="t" style="left:1510.80px;top:41px;font-size:13px;line-height:15px;color:#ffffff;letter-spacing:0.265px">Kaikki sovellukset ja rekisterit</div><div class="t" style="left:1532.70px;top:107px;font-size:13px;line-height:15px;color:#ffffff;letter-spacing:0.387px">Sovelluksen lisätoiminnot</div><div class="t" style="left:125.00px;top:75px;font-size:12px;line-height:14px;color:#ffffff;letter-spacing:1.240px">Myynti</div><div class="t" style="left:557.00px;top:75px;font-size:12px;line-height:14px;color:#ffffff;letter-spacing:0.967px">Osto</div><div class="t" style="left:968.70px;top:75px;font-size:12px;line-height:14px;color:#ffffff;letter-spacing:1.033px">Kirjanpito</div><div class="t" style="left:202.70px;top:87px;font-size:13px;line-height:15px;color:#212529;letter-spacing:0.067px">Etsi</div><div class="t" style="left:266.40px;top:87px;font-size:13px;line-height:15px;color:#ffffff;letter-spacing:0.533px">Uusi</div><div class="t" style="left:341.10px;top:87px;font-size:13px;line-height:15px;color:#ffffff;letter-spacing:0.508px">Suoritettavat</div><div class="t" style="left:465.10px;top:87px;font-size:13px;line-height:15px;color:#ffffff;letter-spacing:0.227px">Eräajolaskut</div><div class="t" style="left:621.80px;top:87px;font-size:13px;line-height:15px;color:#ffffff;letter-spacing:0.200px">Etsi</div><div class="t" style="left:685.40px;top:87px;font-size:13px;line-height:15px;color:#ffffff;letter-spacing:0.833px">Uusi</div><div class="t" style="left:761.90px;top:87px;font-size:13px;line-height:15px;color:#ffffff;letter-spacing:0.333px">Viivakoodi</div><div class="t" style="left:873.30px;top:87px;font-size:13px;line-height:15px;color:#ffffff;letter-spacing:0.475px">Suoritettavat</div><div class="t" style="left:1064.90px;top:87px;font-size:13px;line-height:15px;color:#ffffff;letter-spacing:0.233px">Etsi</div><div class="t" style="left:1128.00px;top:87px;font-size:13px;line-height:15px;color:#ffffff;letter-spacing:1.000px">Uusi</div><div class="t" style="left:125.00px;top:120px;font-size:12px;line-height:14px;color:#ffffff;letter-spacing:1.000px">Pankki</div><div class="t" style="left:207.50px;top:131px;font-size:13px;line-height:15px;color:#ffffff;letter-spacing:0.408px">Maksuaineisto</div><div class="t" style="left:339.00px;top:131px;font-size:13px;line-height:15px;color:#ffffff;letter-spacing:0.400px">Tiliotteet</div><div class="t" style="left:434.00px;top:131px;font-size:13px;line-height:15px;color:#ffffff;letter-spacing:0.420px">Viitemaksut</div><div class="t" style="left:547.00px;top:131px;font-size:13px;line-height:15px;color:#ffffff;letter-spacing:0.129px">E-Laskut</div><div class="t" style="left:19.80px;top:166px;font-size:13px;line-height:15px;color:#ffffff;letter-spacing:0.625px">Toiminnot</div><div class="t" style="left:119.70px;top:166px;font-size:13px;line-height:15px;color:#ffffff;letter-spacing:0.267px">Tulosta</div><div class="t" style="left:201.80px;top:166px;font-size:13px;line-height:15px;color:#ffffff;letter-spacing:0.500px">Näkymä</div><div class="t" style="left:290.20px;top:166px;font-size:13px;line-height:15px;color:#ffffff;letter-spacing:0.260px">Sovellukset</div><div class="t" style="left:861.00px;top:192px;font-size:13px;line-height:15px;color:#212529;letter-spacing:0.318px;font-weight:700">Myyntilasku - Etsi</div><div class="t" style="left:29.20px;top:230px;font-size:12px;line-height:14px;color:#ffffff;letter-spacing:0.700px;font-style:italic">Laskuttamattomat</div><div class="t" style="left:153.00px;top:230px;font-size:12px;line-height:14px;color:#ffffff;letter-spacing:0.433px;font-style:italic">Avoimet</div><div class="t" style="left:217.20px;top:230px;font-size:12px;line-height:14px;color:#ffffff;letter-spacing:0.443px;font-style:italic">Myöhässä</div><div class="t" style="left:291.90px;top:230px;font-size:12px;line-height:14px;color:#ffffff;letter-spacing:1.010px">Uusi lehti*</div><div class="t" style="left:380.70px;top:230px;font-size:12px;line-height:14px;color:#212529;letter-spacing:0.733px">Etsi</div><div class="t" style="left:419.90px;top:230px;font-size:12px;line-height:14px;color:#ffffff;letter-spacing:0.970px">Uusi lehti*</div><div class="t" style="left:4.30px;top:264px;font-size:11.5px;line-height:12px;color:#212529;letter-spacing:0.300px">Etsi</div><div class="t" style="left:171.00px;top:264px;font-size:11.5px;line-height:12px;color:#212529;letter-spacing:0.300px">Alkupvm.</div><div class="t" style="left:288.20px;top:264px;font-size:11.5px;line-height:12px;color:#212529;letter-spacing:0.300px">Loppupvm.</div><div class="t" style="left:406.30px;top:264px;font-size:11.5px;line-height:12px;color:#212529;letter-spacing:0.300px">Kuukausi</div><div class="t" style="left:493.20px;top:264px;font-size:11.5px;line-height:12px;color:#212529;letter-spacing:0.300px">Hakupäivä</div><div class="t" style="left:642.60px;top:264px;font-size:11.5px;line-height:12px;color:#212529;letter-spacing:0.300px">Tila</div><div class="t" style="left:778.50px;top:264px;font-size:11.5px;line-height:12px;color:#212529;letter-spacing:0.300px">Rivit</div><div class="t" style="left:178.80px;top:289px;font-size:12px;line-height:14px;color:#212529;letter-spacing:-0.322px">01.04.2025</div><div class="t" style="left:500.40px;top:290px;font-size:11.5px;line-height:12px;color:#212529;letter-spacing:0.300px">Laskutuspäivä</div><div class="t" style="left:785.70px;top:290px;font-size:11.5px;line-height:12px;color:#212529;letter-spacing:0.300px">25</div><div class="t" style="left:130.60px;top:322px;font-size:12.5px;line-height:14px;color:#ee7326;letter-spacing:0.300px;font-weight:700">1</div><div class="t" style="left:158.00px;top:322px;font-size:12.5px;line-height:14px;color:#212529;letter-spacing:0.533px">Kpl:</div><div class="t" style="left:183.60px;top:322px;font-size:12.5px;line-height:14px;color:#212529;letter-spacing:1.300px;font-weight:700">11</div><div class="t" style="left:224.40px;top:322px;font-size:12.5px;line-height:14px;color:#212529;letter-spacing:0.657px">Valitut:</div><div class="t" style="left:268.80px;top:322px;font-size:12.5px;line-height:14px;color:#212529;letter-spacing:0.900px;font-weight:700">11</div><div class="t" style="left:1126.20px;top:322px;font-size:12.5px;line-height:14px;color:#212529;letter-spacing:0.637px">Ryhmitys:</div><div class="t" style="left:1188.60px;top:322px;font-size:12.5px;line-height:14px;color:#212529;letter-spacing:0.800px;font-weight:700">Laskut</div><div class="t" style="left:1407.00px;top:322px;font-size:12.5px;line-height:14px;color:#212529;letter-spacing:0.769px">Laskuttamatta:</div><div class="t" style="left:1501.00px;top:322px;font-size:12.5px;line-height:14px;color:#dc4a4f;letter-spacing:0.850px;font-weight:700">197</div><div class="t" style="left:115.50px;top:354px;font-size:13px;line-height:15px;color:#f07e3c;letter-spacing:0.960px;font-weight:700">Numero</div><div class="t" style="left:212.00px;top:354px;font-size:13px;line-height:15px;color:#f07e3c;letter-spacing:1.000px">(1)</div><div class="t" style="left:251.40px;top:354px;font-size:13px;line-height:15px;color:#1c9a1c;letter-spacing:-0.100px;font-weight:700">Tila</div><div class="t" style="left:386.80px;top:354px;font-size:13px;line-height:15px;color:#1c9a1c;letter-spacing:0.558px;font-weight:700">Vastaanottaja</div><div class="t" style="left:570.50px;top:354px;font-size:13px;line-height:15px;color:#1c9a1c;letter-spacing:0.427px;font-weight:700">Laskutuspvm.</div><div class="t" style="left:690.90px;top:354px;font-size:13px;line-height:15px;color:#1c9a1c;letter-spacing:0.250px;font-weight:700">Eräpvm.</div><div class="t" style="left:810.40px;top:354px;font-size:13px;line-height:15px;color:#1c9a1c;letter-spacing:0.533px;font-weight:700">Hälytys</div><div class="t" style="left:930.00px;top:354px;font-size:13px;line-height:15px;color:#1c9a1c;letter-spacing:0.650px;font-weight:700">Summa</div><div class="t" style="left:119.80px;top:382px;font-size:16px;line-height:17px;color:#1c9a1c;letter-spacing:0.000px">*</div><div style="position:absolute;left:116px;top:394px;width:14px;height:1px;background:#1c9a1c"></div><div class="t" style="left:251.00px;top:381px;font-size:13px;line-height:15px;color:#212529;letter-spacing:0.020px">Kesken</div><div style="position:absolute;left:0;top:0;width:568.2px;height:711px;overflow:hidden"><div class="t" style="left:385.80px;top:381px;font-size:13px;line-height:15px;color:#212529;letter-spacing:0.353px">Lumi Hankinen Oy</div></div><div class="t" style="left:971.20px;top:381px;font-size:13px;line-height:15px;color:#212529;letter-spacing:-0.371px">1,74 EUR</div><div class="t" style="left:119.80px;top:408px;font-size:16px;line-height:17px;color:#1c9a1c;letter-spacing:0.000px">*</div><div style="position:absolute;left:116px;top:420px;width:14px;height:1px;background:#1c9a1c"></div><div class="t" style="left:251.00px;top:407px;font-size:13px;line-height:15px;color:#212529;letter-spacing:0.020px">Kesken</div><div style="position:absolute;left:0;top:0;width:568.2px;height:711px;overflow:hidden"><div class="t" style="left:385.80px;top:407px;font-size:13px;line-height:15px;color:#212529;letter-spacing:0.263px">Internet Shop Oy/Sakari Shop</div></div><div class="t" style="left:937.00px;top:407px;font-size:13px;line-height:15px;color:#212529;letter-spacing:-0.033px">34 625,01 EUR</div><div class="t" style="left:119.80px;top:434px;font-size:16px;line-height:17px;color:#1c9a1c;letter-spacing:0.000px">*</div><div style="position:absolute;left:116px;top:446px;width:14px;height:1px;background:#1c9a1c"></div><div class="t" style="left:251.00px;top:433px;font-size:13px;line-height:15px;color:#212529;letter-spacing:0.020px">Kesken</div><div style="position:absolute;left:0;top:0;width:568.2px;height:711px;overflow:hidden"><div class="t" style="left:385.80px;top:433px;font-size:13px;line-height:15px;color:#212529;letter-spacing:0.150px">Kaikki Palvelut Oy/Kaisa Karvinen</div></div><div class="t" style="left:956.50px;top:433px;font-size:13px;line-height:15px;color:#212529;letter-spacing:-0.211px">460,66 EUR</div><div class="t" style="left:119.80px;top:460px;font-size:16px;line-height:17px;color:#1c9a1c;letter-spacing:0.000px">*</div><div style="position:absolute;left:116px;top:472px;width:14px;height:1px;background:#1c9a1c"></div><div class="t" style="left:251.00px;top:459px;font-size:13px;line-height:15px;color:#212529;letter-spacing:0.020px">Kesken</div><div class="t" style="left:956.85px;top:459px;font-size:13px;line-height:15px;color:#212529;letter-spacing:-0.250px">506,05 EUR</div><div class="t" style="left:119.80px;top:486px;font-size:16px;line-height:17px;color:#1c9a1c;letter-spacing:0.000px">*</div><div style="position:absolute;left:116px;top:498px;width:14px;height:1px;background:#1c9a1c"></div><div class="t" style="left:251.00px;top:485px;font-size:13px;line-height:15px;color:#212529;letter-spacing:0.020px">Kesken</div><div style="position:absolute;left:0;top:0;width:568.2px;height:711px;overflow:hidden"><div class="t" style="left:385.80px;top:485px;font-size:13px;line-height:15px;color:#212529;letter-spacing:0.215px">Demo Yritys Oy</div></div><div class="t" style="left:956.85px;top:485px;font-size:13px;line-height:15px;color:#212529;letter-spacing:-0.250px">220,13 EUR</div><div class="t" style="left:119.80px;top:512px;font-size:16px;line-height:17px;color:#1c9a1c;letter-spacing:0.000px">*</div><div style="position:absolute;left:116px;top:524px;width:14px;height:1px;background:#1c9a1c"></div><div class="t" style="left:251.00px;top:511px;font-size:13px;line-height:15px;color:#212529;letter-spacing:0.020px">Kesken</div><div style="position:absolute;left:0;top:0;width:568.2px;height:711px;overflow:hidden"><div class="t" style="left:385.80px;top:511px;font-size:13px;line-height:15px;color:#212529;letter-spacing:0.215px">Demo Yritys Oy</div></div><div class="t" style="left:956.85px;top:511px;font-size:13px;line-height:15px;color:#212529;letter-spacing:-0.250px">721,53 EUR</div><div class="t" style="left:119.80px;top:538px;font-size:16px;line-height:17px;color:#1c9a1c;letter-spacing:0.000px">*</div><div style="position:absolute;left:116px;top:550px;width:14px;height:1px;background:#1c9a1c"></div><div class="t" style="left:251.00px;top:537px;font-size:13px;line-height:15px;color:#212529;letter-spacing:0.020px">Kesken</div><div style="position:absolute;left:0;top:0;width:568.2px;height:711px;overflow:hidden"><div class="t" style="left:385.80px;top:537px;font-size:13px;line-height:15px;color:#212529;letter-spacing:0.150px">Data Ky</div></div><div class="t" style="left:946.35px;top:537px;font-size:13px;line-height:15px;color:#212529;letter-spacing:-0.250px">1 146,37 EUR</div><div class="t" style="left:119.80px;top:564px;font-size:16px;line-height:17px;color:#1c9a1c;letter-spacing:0.000px">*</div><div style="position:absolute;left:116px;top:576px;width:14px;height:1px;background:#1c9a1c"></div><div class="t" style="left:251.00px;top:563px;font-size:13px;line-height:15px;color:#212529;letter-spacing:0.020px">Kesken</div><div class="t" style="left:970.35px;top:563px;font-size:13px;line-height:15px;color:#212529;letter-spacing:-0.250px">0,00 EUR</div><div class="t" style="left:119.80px;top:590px;font-size:16px;line-height:17px;color:#1c9a1c;letter-spacing:0.000px">*</div><div style="position:absolute;left:116px;top:602px;width:14px;height:1px;background:#1c9a1c"></div><div class="t" style="left:251.00px;top:589px;font-size:13px;line-height:15px;color:#212529;letter-spacing:0.020px">Kesken</div><div style="position:absolute;left:0;top:0;width:568.2px;height:711px;overflow:hidden"><div class="t" style="left:385.80px;top:589px;font-size:13px;line-height:15px;color:#212529;letter-spacing:0.150px">Firma Oy Ab, Turku/Kalle Kippari</div></div><div class="t" style="left:957.85px;top:589px;font-size:13px;line-height:15px;color:#212529;letter-spacing:-0.250px">511,32 EUR</div><div class="t" style="left:119.80px;top:616px;font-size:16px;line-height:17px;color:#1c9a1c;letter-spacing:0.000px">*</div><div style="position:absolute;left:116px;top:628px;width:14px;height:1px;background:#1c9a1c"></div><div class="t" style="left:251.00px;top:615px;font-size:13px;line-height:15px;color:#212529;letter-spacing:0.020px">Kesken</div><div class="t" style="left:970.35px;top:615px;font-size:13px;line-height:15px;color:#212529;letter-spacing:-0.250px">0,00 EUR</div><div class="t" style="left:115.20px;top:641px;font-size:13px;line-height:15px;color:#1c9a1c;letter-spacing:0.600px">30255</div><div style="position:absolute;left:116.2px;top:654px;width:37.4px;height:1px;background:#1c9a1c"></div><div class="t" style="left:251.00px;top:641px;font-size:13px;line-height:15px;color:#212529;letter-spacing:0.657px">Maksettu</div><div style="position:absolute;left:0;top:0;width:568.2px;height:711px;overflow:hidden"><div class="t" style="left:385.80px;top:641px;font-size:13px;line-height:15px;color:#212529;letter-spacing:0.391px">Firma Oy Ab/Matti Mainio</div></div><div class="t" style="left:570.30px;top:641px;font-size:13px;line-height:15px;color:#212529;letter-spacing:0.222px">17.04.2025</div><div class="t" style="left:691.70px;top:641px;font-size:13px;line-height:15px;color:#6c757d;letter-spacing:0.111px">01.05.2025</div><div class="t" style="left:860.00px;top:641px;font-size:13px;line-height:15px;color:#6c757d;letter-spacing:1.400px">14</div><div class="t" style="left:946.35px;top:641px;font-size:13px;line-height:15px;color:#212529;letter-spacing:-0.250px">1 672,54 EUR</div>
</body></html>
